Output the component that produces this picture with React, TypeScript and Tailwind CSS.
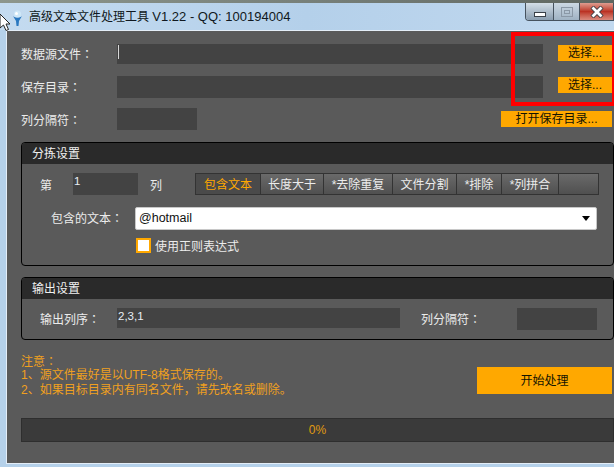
const FONT = "font-['Liberation_Sans','Noto_Sans_CJK_SC',sans-serif]";

// full-width colon sits centred in the cell on this UI, as the TC font draws it
function Label({ text, className }: { text: string; className: string }) {
  return (
    <span className={className}>
      {text}
      <span className="font-['Noto_Sans_CJK_TC',sans-serif]">：</span>
    </span>
  );
}

function Field({ className, value, children }: { className: string; value?: string; children?: React.ReactNode }) {
  return (
    <div className={`bg-[#434343] text-[11.5px] leading-[14px] text-[#e8eef5] ${className}`}>
      {value}
      {children}
    </div>
  );
}

function OrangeButton({ className, label }: { className: string; label: string }) {
  return (
    <button className={`flex items-center justify-center bg-[#ffa800] text-[12px] text-[#141400] ${className}`}>
      {label}
    </button>
  );
}

function Group({ title, className, children }: { title: string; className: string; children: React.ReactNode }) {
  return (
    <section className={`ml-[14px] overflow-hidden rounded-[4px] border border-black bg-[#5a5a5a] ${className}`}>
      <div className="h-[21px] bg-[#2a2a2a] pl-[10px] pt-[1px] text-[12px] leading-[21px] text-[#f0f0f0]">{title}</div>
      {children}
    </section>
  );
}

const tabs = [
  { label: '包含文本', w: 'w-[65px]' },
  { label: '长度大于', w: 'w-[63px]' },
  { label: '*去除重复', w: 'w-[69px]' },
  { label: '文件分割', w: 'w-[64px]' },
  { label: '*排除', w: 'w-[45px]' },
  { label: '*列拼合', w: 'w-[57px]' },
  { label: '', w: 'w-[39px]' },
];

export default function App() {
  return (
    <div className={`relative h-[467px] w-[614px] overflow-hidden bg-[#b5d1ea] ${FONT}`}>
      <div className="h-[3px] bg-gradient-to-r from-[#8d968c] via-[#77807a] to-[#5f6660]" />

      {/* title bar */}
      <div className="flex h-[27px] items-center bg-gradient-to-r from-[#c4dbf0] via-[#b4d0ea] to-[#c2d9ef] pl-[12px] pt-[1px]">
        <svg width="11" height="17" viewBox="0 0 11 17" className="mr-[6px] mt-[2px]">
          <path d="M1 6 C3 8 8 8 10 6 L7 11 L6.5 16 L4.5 16 L4 11 Z" fill="#2a78c0" />
          <circle cx="5.5" cy="4" r="3.5" fill="#cfe8f8" />
          <circle cx="4.5" cy="3.5" r="1.5" fill="#ffffff" />
        </svg>
        <span className="text-[12px] text-[#101820]">
          高级文本文件处理工具 <span className="text-[13px]">V1.22 - QQ: 100194004</span>
        </span>
        <div className="-mt-[1px] ml-auto flex h-[18px] self-start overflow-hidden rounded-bl-[4px] border border-t-0 border-[#46525e]">
          <div className="flex w-[27px] items-center justify-center bg-gradient-to-b from-[#d4dee7] to-[#8b9eb0]">
            <div className="mt-[5px] h-[5px] w-[12px] border border-[#3a4048] bg-white" />
          </div>
          <div className="flex w-[27px] items-center justify-center border-x border-[#46525e] bg-gradient-to-b from-[#ccd8e3] to-[#9fb2c3]">
            <div className="flex h-[10px] w-[12px] items-center justify-center border border-[#8a98a6]">
              <div className="h-[4px] w-[6px] border border-[#8a98a6]" />
            </div>
          </div>
          <div className="flex w-[33px] items-center justify-center bg-gradient-to-b from-[#dd9c90] via-[#bb3224] to-[#d98a7e]">
            <svg width="14" height="12" viewBox="0 0 14 12">
              <path d="M2 1 L12 11 M12 1 L2 11" stroke="#3a3f46" strokeWidth="4.5" />
              <path d="M2.5 1.5 L11.5 10.5 M11.5 1.5 L2.5 10.5" stroke="#ffffff" strokeWidth="2.8" />
            </svg>
          </div>
        </div>
      </div>

      {/* window body */}
      <div className="ml-[6px] h-[434px] border border-r-0 border-[#e4eef8] bg-[#5a5a5a] pt-[13px] text-[12px] text-[#ececec]">
        <div className="flex h-[20px] items-center">
          <Label text="数据源文件" className="ml-[14px] w-[96px]" />
          <Field className="h-[20px] w-[426px] pl-[1px] pt-[1px]">
            <div className="h-[14px] w-px bg-[#d8d8d8]" />
          </Field>
          <OrangeButton className="ml-[15px] mt-[1px] h-[16px] w-[54px] self-start" label="选择..." />
        </div>
        <div className="mt-[12px] flex h-[22px] items-center">
          <Label text="保存目录" className="ml-[14px] w-[96px]" />
          <Field className="h-[22px] w-[426px]" />
          <OrangeButton className="ml-[15px] mt-[1px] h-[16px] w-[54px] self-start" label="选择..." />
        </div>
        <div className="mt-[10px] flex h-[22px] items-center">
          <Label text="列分隔符" className="ml-[14px] mt-[3px] w-[96px]" />
          <Field className="h-[22px] w-[80px]" />
          <OrangeButton className="ml-[304px] mt-[3px] h-[16px] w-[111px] self-start" label="打开保存目录..." />
        </div>

        <Group title="分拣设置" className="mt-[12px] h-[124px]">
          <div className="mt-[9px] flex h-[22px] items-center">
            <span className="ml-[18px] mt-[3px] w-[33px]">第</span>
            <Field className="h-[22px] w-[65px] pl-[1px] pt-[1px]" value="1" />
            <span className="ml-[12px] mt-[3px] w-[45px]">列</span>
            <div className="flex h-[22px] border border-[#333]">
              {tabs.map((t, i) => (
                <div
                  key={i}
                  className={`flex items-center justify-center border-r border-[#333] pt-[2px] last:border-r-0 ${t.w} ${
                    i === 0
                      ? 'bg-[#4a4a4a] text-[#ffa800]'
                      : 'bg-gradient-to-b from-[#6a6a6a] to-[#505050] text-[#ececec]'
                  }`}
                >
                  {t.label}
                </div>
              ))}
            </div>
          </div>
          <div className="mt-[12px] flex h-[23px] items-center">
            <Label text="包含的文本" className="ml-[29px] w-[84px]" />
            <div className="flex h-[23px] w-[462px] items-center justify-between rounded-[2px] border border-[#c8c8c8] bg-white pl-[3px] pr-[3px] text-[12.5px] text-[#111]">
              @hotmail
              <span className="mr-[3px] h-0 w-0 border-x-[4px] border-t-[5px] border-x-transparent border-t-black" />
            </div>
          </div>
          <div className="ml-[114px] mt-[8px] flex h-[15px] items-center">
            <span className="h-[15px] w-[15px] border-2 border-[#ffa800] bg-white" />
            <span className="ml-[4px] mt-[3px]">使用正则表达式</span>
          </div>
        </Group>

        <Group title="输出设置" className="mt-[11px] h-[63px]">
          <div className="mt-[9px] flex items-start">
            <Label text="输出列序" className="ml-[18px] mt-[2px] w-[77px]" />
            <Field className="h-[20px] w-[283px] pl-[1px] pt-[1px]" value="2,3,1" />
            <Label text="列分隔符" className="ml-[21px] mt-[2px] w-[96px]" />
            <Field className="h-[22px] w-[80px]" />
          </div>
        </Group>

        <div className="ml-[14px] mt-[13px] flex items-start justify-between text-[#f0a020]">
          <div className="leading-[15px]">
            <Label text="注意" className="block h-[15px]" />
            <div className="h-[15px]">1、源文件最好是以UTF-8格式保存的。</div>
            <div className="h-[15px]">2、如果目标目录内有同名文件，请先改名或删除。</div>
          </div>
          <OrangeButton className="mr-[2px] mt-[14px] h-[27px] w-[135px]" label="开始处理" />
        </div>

        <div className="ml-[14px] mt-[20px] flex h-[24px] items-center justify-center border border-[#2e2e2e] bg-[#3a3a3a] text-[#e09a10]">
          0%
        </div>
      </div>

      {/* annotation drawn over the screenshot */}
      <div className="absolute left-[511px] top-[32px] h-[74px] w-[105px] border-[4px] border-[#ff0000]" />

      {/* mouse pointer caught at the window corner */}
      <svg width="11" height="18" viewBox="0 0 11 18" className="absolute left-0 top-[13px]">
        <path d="M0 1 L10 11 L6 11 L8.5 16.5 L6 17.5 L3.5 12 L0 15 Z" fill="#ffffff" stroke="#222222" strokeWidth="1" />
      </svg>
    </div>
  );
}
